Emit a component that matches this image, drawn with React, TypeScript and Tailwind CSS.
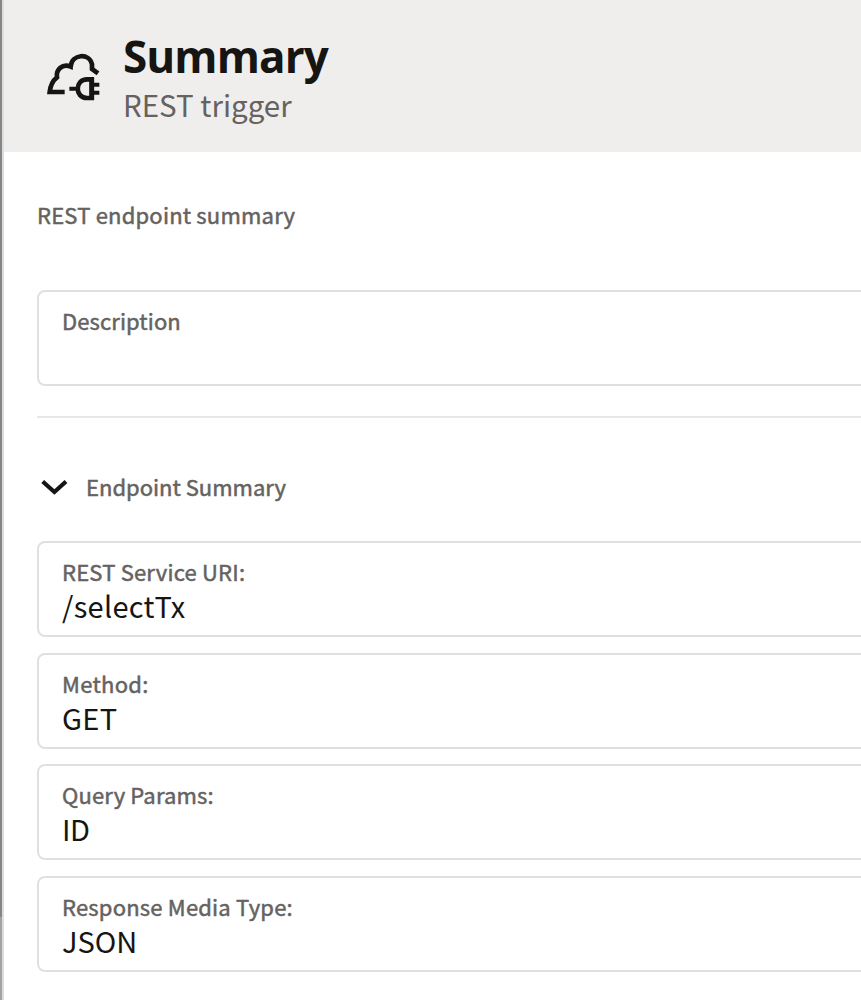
const fields = [
  { label: 'REST Service URI:', value: '/selectTx', ls: 'tracking-[0.2px]', vs: 'tracking-[0.3px]', gap: 'mb-4' },
  { label: 'Method:', value: 'GET', ls: 'tracking-[0.3px]', vs: 'tracking-[0.3px]', gap: 'mb-[15px]' },
  { label: 'Query Params:', value: 'ID', ls: 'tracking-[0.15px]', vs: 'tracking-[-0.4px]', gap: 'mb-4' },
  { label: 'Response Media Type:', value: 'JSON', ls: 'tracking-[0.2px]', vs: 'tracking-normal', gap: '' },
];

function CloudPlugIcon() {
  return (
    <svg className="h-[70px] w-[80px] shrink-0" viewBox="0 0 240 210" fill="none" stroke="#161513" strokeWidth="14">
      <path d="M89 153H44C46 136 53 119 66 109C62 86 82 67 107 77C110 39 163 34 171 70V84L189 97" />
      <path d="M177 115H156C119 115 119 171 156 171H177" />
      <path d="M170 109V177" strokeWidth="15" />
      <path d="M103 143H128M170 131H193M170 155H193" strokeWidth="12" />
    </svg>
  );
}

export default function App() {
  return (
    <div className="flex h-[1000px] w-full overflow-hidden bg-white font-['Noto_Sans_CJK_SC',sans-serif] text-[#161513]">
      <div className="flex w-[2px] shrink-0 flex-col bg-[#a2a2a2]">
        <div className="h-[917px] bg-[#858585]" />
      </div>
      <div className="w-[2px] shrink-0 bg-[#dddddd]" />
      <div className="min-w-0 flex-1">
        <header className="flex h-[152px] bg-[#efeeed] pl-[31px]">
          <div className="pt-[41px]">
            <CloudPlugIcon />
          </div>
          <div className="pl-[7px] pt-[29px]">
            <h1 className="h-[53px] whitespace-nowrap pl-px font-['Open_Sans',sans-serif] text-[44px] font-bold leading-[54px] tracking-[-0.9px]">Summary</h1>
            <p className="h-[44px] whitespace-nowrap pl-px text-[29.5px] leading-[44px] text-[#65625f]">REST trigger</p>
          </div>
        </header>
        <main className="pl-[33px]">
          <p className="h-[138px] whitespace-nowrap pt-[46px] text-[22px] leading-8 tracking-[0.2px] text-[#65625f] [-webkit-text-stroke:0.5px_#65625f]">REST endpoint summary</p>
          <section className="-mr-3 h-24 rounded-lg border-2 border-[#e1e0df] pl-[23px] pt-[12px]">
            <p className="text-[22px] leading-8 tracking-[0.1px] text-[#65625f] [-webkit-text-stroke:0.5px_#65625f]">Description</p>
          </section>
          <div className="mt-[30px] h-[2px] bg-[#e8e7e6]" />
          <div className="flex h-[123px] items-start pl-1 pt-[52px]">
            <svg className="mt-[9px] h-[18px] w-[27px] shrink-0" viewBox="0 0 27 18" fill="none" stroke="#161513" strokeWidth="4.2">
              <path d="M1.7 2.5L13.4 13L25 2.5" />
            </svg>
            <h2 className="ml-[18px] whitespace-nowrap text-[22px] leading-8 text-[#65625f] [-webkit-text-stroke:0.5px_#65625f]">Endpoint Summary</h2>
          </div>
          {fields.map((f) => (
            <section key={f.label} className={`-mr-3 h-24 rounded-lg border-2 border-[#e1e0df] pl-[23px] pt-[12px] ${f.gap}`}>
              <p className={`h-8 whitespace-nowrap text-[22px] leading-8 text-[#65625f] [-webkit-text-stroke:0.5px_#65625f] ${f.ls}`}>{f.label}</p>
              <p className={`whitespace-nowrap text-[29px] leading-9 ${f.vs}`}>{f.value}</p>
            </section>
          ))}
        </main>
      </div>
    </div>
  );
}
